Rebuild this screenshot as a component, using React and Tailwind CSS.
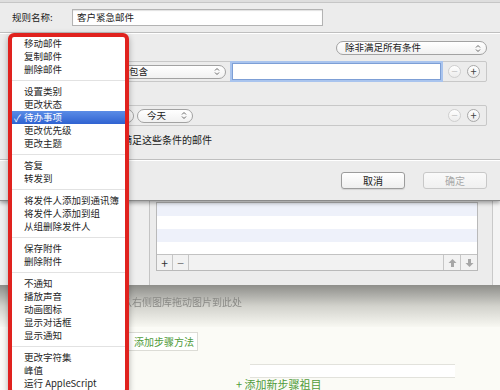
import React from 'react';

const groups = [
  ['移动邮件', '复制邮件', '删除邮件'],
  ['设置类别', '更改状态', '待办事项', '更改优先级', '更改主题'],
  ['答复', '转发到'],
  ['将发件人添加到通讯簿', '将发件人添加到组', '从组删除发件人'],
  ['保存附件', '删除附件'],
  ['不通知', '播放声音', '动画图标', '显示对话框', '显示通知'],
  ['更改字符集', '峰值', '运行 AppleScript'],
];

function UpDown() {
  return (
    <svg width="6" height="9" viewBox="0 0 6 9" className="shrink-0">
      <path d="M1 3.5 L3 1.5 L5 3.5 M1 5.5 L3 7.5 L5 5.5" fill="none" stroke="#666" strokeWidth="1" />
    </svg>
  );
}

function Select({ label, className = '' }) {
  return (
    <div className={`h-[14px] flex items-center justify-between rounded-full border border-[#a2a2a2] bg-gradient-to-b from-white to-[#f1f1f1] pl-[8px] pr-[5px] text-[9.5px] leading-none text-[#222] ${className}`}>
      <span>{label}</span>
      <UpDown />
    </div>
  );
}

function RoundBtn({ sign, faded }) {
  return (
    <div className={`w-[13px] h-[13px] rounded-full border flex items-center justify-center text-[11px] leading-none bg-gradient-to-b from-white to-[#ececec] ${faded ? 'border-[#cfcfcf] text-[#c4c4c4]' : 'border-[#a8a8a8] text-[#444]'}`}>
      {sign}
    </div>
  );
}

function Separator() {
  return <div className="h-[2px] border-t border-[#bfbfbf] border-b border-b-white" />;
}

function Menu() {
  return (
    <div className="absolute z-20 left-[8px] top-[33px] w-[121px] h-[362px] border-[4px] border-[#e0221e] rounded-[6px] bg-white shadow-[0_2px_6px_rgba(0,0,0,0.3)] overflow-hidden">
      {groups.map((g, gi) => (
        <div key={gi}>
          {gi > 0 && (
            <div className="h-[9px] flex items-center">
              <div className="w-full h-px bg-[#e2e2e2]" />
            </div>
          )}
          {g.map((item) => {
            const active = item === '待办事项';
            return (
              <div
                key={item}
                className={`relative h-[13px] pl-[12px] flex items-center text-[9.5px] leading-[13px] whitespace-nowrap ${active ? 'bg-gradient-to-b from-[#5b8ce6] to-[#2f62d1] text-white' : 'text-[#262626]'}`}
              >
                {active && <span className="absolute left-[2px] top-0 text-[10px] leading-[13px]">✓</span>}
                {item}
              </div>
            );
          })}
        </div>
      ))}
    </div>
  );
}

function Dialog() {
  return (
    <div className="h-[205px] bg-[#ececec] flex flex-col border-b border-[#8a8a8a] shadow-[0_2px_4px_rgba(0,0,0,0.35)] relative z-10">
      <div className="h-[3px] bg-[#dedede] border-b border-[#c6c6c6]" />

      <div className="mt-[6px] h-[17px] flex items-center text-[9.5px] text-[#222]">
        <div className="w-[72px] pl-[12px]">规则名称:</div>
        <div className="w-[251px] h-[17px] border border-[#b3b3b3] bg-white flex items-center pl-[4px] shadow-[inset_0_1px_1px_rgba(0,0,0,0.12)]">
          客户紧急邮件
        </div>
      </div>

      <div className="mt-[6px]">
        <Separator />
      </div>

      <div className="mt-[7px] flex justify-end pr-[13px]">
        <Select label="除非满足所有条件" className="w-[151px]" />
      </div>

      <div className="mt-[6px] ml-[50px] mr-[13px] h-[21px] border border-[#c8c8c8] rounded-[2px] flex items-center pl-[9px] pr-[6px]">
        <Select label="包含" className="w-[166px] pl-[68px]" />
        <div className="ml-[6px] w-[209px] h-[17px] bg-white border border-[#7d9fd6] shadow-[0_0_0_2px_#a9c4ee]" />
        <div className="ml-auto flex items-center gap-[6px]">
          <RoundBtn sign="−" faded />
          <RoundBtn sign="+" />
        </div>
      </div>

      <div className="mt-[23px] ml-[50px] mr-[13px] h-[21px] border border-[#c8c8c8] rounded-[2px] flex items-center pl-[9px] pr-[6px]">
        <Select label="" className="w-[74px]" />
        <Select label="今天" className="ml-[3px] w-[56px] pl-[9px]" />
        <div className="ml-auto flex items-center gap-[6px]">
          <RoundBtn sign="−" faded />
          <RoundBtn sign="+" />
        </div>
      </div>

      <div className="mt-[7px] h-[13px] pl-[112px] text-[10px] leading-[13px] text-[#222]">对满足这些条件的邮件</div>

      <div className="mt-[13px]">
        <Separator />
      </div>

      <div className="mt-[11px] flex justify-end gap-[18px] pr-[13px]">
        <div className="w-[64px] h-[17px] rounded-[3px] border border-[#9c9c9c] bg-gradient-to-b from-white to-[#efefef] flex items-center justify-center text-[10px] text-[#222] shadow-[0_1px_1px_rgba(0,0,0,0.1)]">
          取消
        </div>
        <div className="w-[64px] h-[17px] rounded-[3px] border border-[#c8c8c8] bg-gradient-to-b from-[#fafafa] to-[#f0f0f0] flex items-center justify-center text-[10px] text-[#a8a8a8]">
          确定
        </div>
      </div>
    </div>
  );
}

function ArrowIcon({ up }) {
  return (
    <svg width="9" height="10" viewBox="0 0 9 10">
      <path
        d={up ? 'M4.5 1 L8.5 5 L6 5 L6 9 L3 9 L3 5 L0.5 5 Z' : 'M4.5 9 L8.5 5 L6 5 L6 1 L3 1 L3 5 L0.5 5 Z'}
        fill="#a6a6a6"
      />
    </svg>
  );
}

function BackWindow() {
  return (
    <div className="h-[85px] flex bg-[#ececec]">
      <div className="w-[150px] border-r border-[#c4c4c4] bg-[#efefef]" />
      <div className="flex-1 flex flex-col pl-[6px]">
        <div className="w-[322px] mt-[1px] border border-[#b9b9b9] bg-white flex flex-col">
          <div className="h-[13px] bg-[#eef1fa]" />
          <div className="h-[13px] bg-white" />
          <div className="h-[13px] bg-[#eef1fa]" />
          <div className="h-[12px] bg-white" />
          <div className="h-[16px] border-t border-[#c2c2c2] bg-[#f2f2f2] flex items-stretch">
            <div className="w-[16px] border-r border-[#c6c6c6] flex items-center justify-center text-[12px] leading-none text-[#333]">+</div>
            <div className="w-[16px] border-r border-[#c6c6c6] flex items-center justify-center text-[12px] leading-none text-[#777]">−</div>
            <div className="ml-auto w-[17px] border-l border-[#c6c6c6] flex items-center justify-center">
              <ArrowIcon up />
            </div>
            <div className="w-[17px] border-l border-[#c6c6c6] flex items-center justify-center">
              <ArrowIcon />
            </div>
          </div>
        </div>
      </div>
      <div className="w-[15px] border-r border-[#c9c9c9]" />
      <div className="w-[7px] bg-[#f4f4f4]" />
    </div>
  );
}

function WebArea() {
  return (
    <div className="flex-1 flex flex-col bg-[#fbfbf6]">
      <div className="h-[42px] bg-gradient-to-b from-[#8e8e8a] via-[#d2d2cc] to-[#f8f8f2] pl-[122px] pt-[10px] text-[10px] leading-[13px] text-[#8a8a86] blur-[0.3px]">
        从右侧图库拖动图片到此处
      </div>
      <div className="ml-[118px] mt-[5px] w-[80px] h-[19px] border border-[#dcdcd6] bg-white flex items-center pl-[15px] text-[10px] whitespace-nowrap text-[#4f9b3a]">
        添加步骤方法
      </div>
      <div className="mt-[13px] ml-[250px] w-[205px] h-[14px] border-t border-b border-[#e2e2dc] bg-white" />
      <div className="pl-[236px] text-[11px] leading-[12px] whitespace-nowrap text-[#4f9b3a]">+ 添加新步骤祖目</div>
    </div>
  );
}

export default function App() {
  return (
    <div className="relative w-[500px] h-[390px] overflow-hidden bg-[#fbfbf6] flex flex-col font-['Noto_Sans_CJK_SC','Liberation_Sans',sans-serif]">
      <Dialog />
      <BackWindow />
      <WebArea />
      <Menu />
    </div>
  );
}
